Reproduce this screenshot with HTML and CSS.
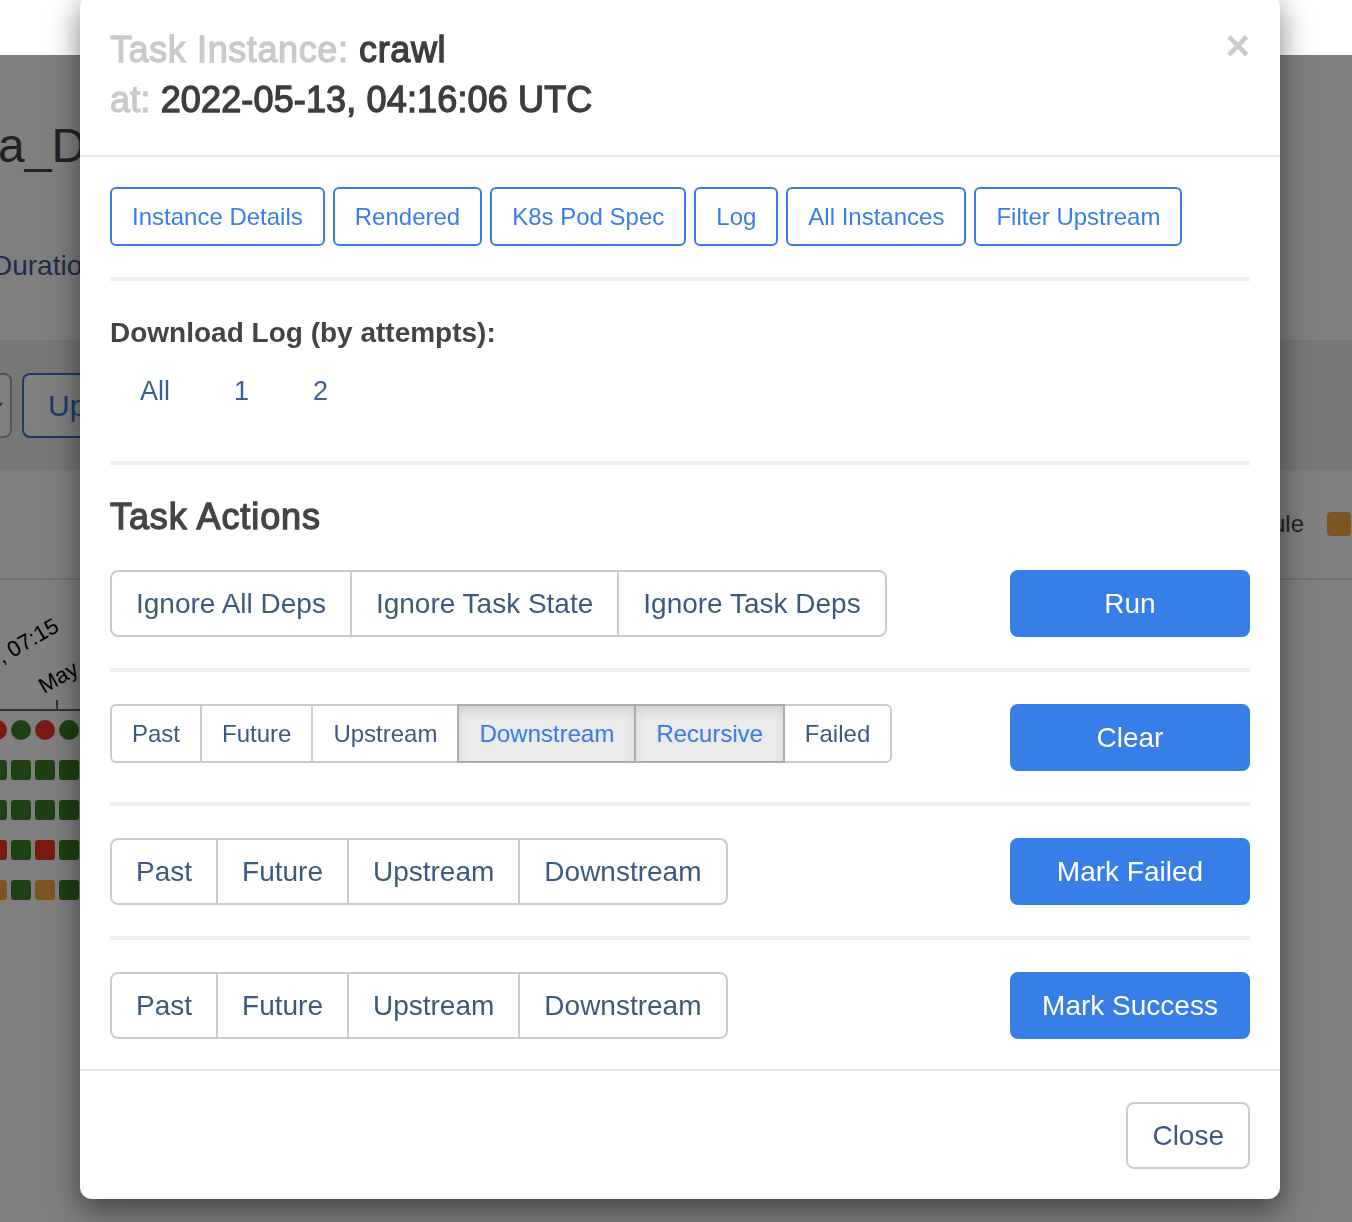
FILE: index.html
```html
<!DOCTYPE html>
<html lang="en">
<head>
    <meta charset="UTF-8">
    <meta name="viewport" content="width=device-width, initial-scale=1">
    <title>Task Instance: crawl</title>
    <link rel="stylesheet" href="styles.css">
</head>
<body>
    <div class="navbar"></div>

    <!-- page behind the modal -->
    <div class="page">
        <div class="page-header">
            <h2 class="dag-title">a_DAG</h2>
            <div class="nav-tab">Duration</div>
        </div>
        <div class="toolbar">
            <div class="select">
                <svg width="16" height="10" viewBox="0 0 16 10"><path d="M2 2l6 6 6-6" fill="none" stroke="#666" stroke-width="2"/></svg>
            </div>
            <button class="btn-up">Update</button>
        </div>
        <div class="legend">
            <span>up_for_reschedule</span>
            <i class="swatch"></i>
        </div>
        <svg class="chart" width="1352" height="642">
            <text x="2" y="84" transform="rotate(-30 2 84)">, 07:15</text>
            <text x="44" y="114" transform="rotate(-30 44 114)">May 13</text>
            <line x1="0" y1="130" x2="200" y2="130" stroke="#666" stroke-width="2"/>
            <line x1="57" y1="120" x2="57" y2="130" stroke="#666" stroke-width="2"/>
            <circle cx="-3" cy="150" r="10" class="failed"/>
            <circle cx="21" cy="150" r="10" class="success"/>
            <circle cx="45" cy="150" r="10" class="failed"/>
            <circle cx="69" cy="150" r="10" class="success"/>
            <rect x="-13" y="180" width="20" height="20" rx="3" class="success"/>
            <rect x="11" y="180" width="20" height="20" rx="3" class="success"/>
            <rect x="35" y="180" width="20" height="20" rx="3" class="success"/>
            <rect x="59" y="180" width="20" height="20" rx="3" class="success"/>
            <rect x="-13" y="220" width="20" height="20" rx="3" class="success"/>
            <rect x="11" y="220" width="20" height="20" rx="3" class="success"/>
            <rect x="35" y="220" width="20" height="20" rx="3" class="success"/>
            <rect x="59" y="220" width="20" height="20" rx="3" class="success"/>
            <rect x="-13" y="260" width="20" height="20" rx="3" class="failed"/>
            <rect x="11" y="260" width="20" height="20" rx="3" class="success"/>
            <rect x="35" y="260" width="20" height="20" rx="3" class="failed"/>
            <rect x="59" y="260" width="20" height="20" rx="3" class="success"/>
            <rect x="-13" y="300" width="20" height="20" rx="3" class="retry"/>
            <rect x="11" y="300" width="20" height="20" rx="3" class="success"/>
            <rect x="35" y="300" width="20" height="20" rx="3" class="retry"/>
            <rect x="59" y="300" width="20" height="20" rx="3" class="success"/>
        </svg>
    </div>

    <div class="backdrop"></div>

    <!-- task instance modal -->
    <div class="modal">
        <div class="modal-header">
            <button class="close">&times;</button>
            <h4 class="modal-title">
                <span class="title-line"><span class="muted">Task Instance:</span> crawl</span>
                <span class="date-line"><span class="muted">at:</span> 2022-05-13, 04:16:06 UTC</span>
            </h4>
        </div>
        <div class="modal-body">
            <div class="links">
                <a class="btn btn-outline">Instance Details</a>
                <a class="btn btn-outline">Rendered</a>
                <a class="btn btn-outline">K8s Pod Spec</a>
                <a class="btn btn-outline">Log</a>
                <a class="btn btn-outline">All Instances</a>
                <a class="btn btn-outline">Filter Upstream</a>
            </div>
            <hr>
            <strong class="label">Download Log (by attempts):</strong>
            <ul class="pills">
                <li><a>All</a></li>
                <li><a>1</a></li>
                <li><a>2</a></li>
            </ul>
            <hr>
            <h4 class="section-title">Task Actions</h4>

            <div class="action-row">
                <div class="btn-group btn-group-lg">
                    <button class="btn">Ignore All Deps</button>
                    <button class="btn">Ignore Task State</button>
                    <button class="btn">Ignore Task Deps</button>
                </div>
                <button class="btn btn-primary">Run</button>
            </div>
            <hr>
            <div class="action-row">
                <div class="btn-group">
                    <button class="btn">Past</button>
                    <button class="btn">Future</button>
                    <button class="btn">Upstream</button>
                    <button class="btn active">Downstream</button>
                    <button class="btn active">Recursive</button>
                    <button class="btn">Failed</button>
                </div>
                <button class="btn btn-primary">Clear</button>
            </div>
            <hr>
            <div class="action-row">
                <div class="btn-group btn-group-lg">
                    <button class="btn">Past</button>
                    <button class="btn">Future</button>
                    <button class="btn">Upstream</button>
                    <button class="btn">Downstream</button>
                </div>
                <button class="btn btn-primary">Mark Failed</button>
            </div>
            <hr>
            <div class="action-row">
                <div class="btn-group btn-group-lg">
                    <button class="btn">Past</button>
                    <button class="btn">Future</button>
                    <button class="btn">Upstream</button>
                    <button class="btn">Downstream</button>
                </div>
                <button class="btn btn-primary">Mark Success</button>
            </div>
        </div>
        <div class="modal-footer">
            <button class="btn btn-lg">Close</button>
        </div>
    </div>
</body>
</html>
```

FILE: styles.css
```css
body {
    font-family: "Liberation Sans", Arial, sans-serif;
    font-size: 28px;
    color: #444;
    margin: 0;
    padding: 0;
    width: 1352px;
    height: 1222px;
    overflow: hidden;
    background: #fff;
}

/* ---------- page behind ---------- */

.navbar {
    position: fixed;
    top: 0;
    left: 0;
    right: 0;
    height: 55px;
    background: #fff;
    z-index: 20;
}

.page {
    padding-top: 55px;
}

.page-header {
    height: 285px;
    padding-top: 63px;
    box-sizing: border-box;
}

.dag-title {
    margin: 0 0 0 -2px;
    font-size: 48px;
    font-weight: normal;
    line-height: 56px;
    color: #444;
}

.nav-tab {
    margin: 72px 0 0 -8px;
    line-height: 40px;
    color: #3c6090;
}

.toolbar {
    display: flex;
    height: 130px;
    padding-top: 33px;
    box-sizing: border-box;
    background: #eee;
}

.select {
    width: 100px;
    height: 65px;
    margin-left: -88px;
    padding-right: 6px;
    box-sizing: border-box;
    display: flex;
    align-items: center;
    justify-content: flex-end;
    background: #fff;
    border: 2px solid #aaa;
    border-radius: 8px;
}

.btn-up {
    height: 65px;
    margin-left: 10px;
    padding: 0 24px;
    font-family: inherit;
    font-size: 30px;
    color: #3a74d4;
    background: #fff;
    border: 2px solid #3a74d4;
    border-radius: 8px;
}

.legend {
    display: flex;
    justify-content: flex-end;
    align-items: center;
    height: 108px;
    padding-right: 1px;
    border-bottom: 2px solid #e2e2e2;
    font-size: 24px;
    color: #444;
}

.swatch {
    width: 24px;
    height: 24px;
    margin-left: 23px;
    border-radius: 4px;
    background: #faaa46;
}

.chart {
    display: block;
    overflow: visible;
}

.chart text {
    font-family: "Liberation Sans", Arial, sans-serif;
    font-size: 22px;
    fill: #000;
}

.success { fill: #3e8028; }
.failed { fill: #f0362a; }
.retry { fill: #faaa46; }

.backdrop {
    position: fixed;
    top: 0;
    left: 0;
    right: 0;
    bottom: 0;
    background: rgba(0, 0, 0, 0.5);
    z-index: 10;
}

/* ---------- modal ---------- */

.modal {
    position: absolute;
    top: -5px;
    left: 80px;
    width: 1200px;
    background: #fff;
    border-radius: 12px;
    box-shadow: 0 10px 30px rgba(0, 0, 0, 0.5);
    z-index: 30;
}

.modal-header {
    padding: 30px;
    border-bottom: 2px solid #e5e5e5;
}

.modal-title {
    margin: 0;
    font-size: 36px;
    font-weight: normal;
    line-height: 50px;
    color: #3d3d3d;
    -webkit-text-stroke-width: 1.3px;
}

.title-line,
.date-line {
    display: block;
}

.title-line {
    letter-spacing: 0.6px;
}

.date-line {
    letter-spacing: 0.15px;
}

.muted {
    color: #cacaca;
}

.close {
    float: right;
    padding: 0;
    border: 0;
    background: none;
    font-family: inherit;
    font-size: 42px;
    font-weight: bold;
    line-height: 1;
    color: #000;
    opacity: 0.2;
}

.modal-body {
    padding: 30px;
}

.modal-footer {
    padding: 31px 30px 30px;
    border-top: 2px solid #e5e5e5;
    text-align: right;
}

hr {
    height: 4px;
    margin: 31px 0 32px;
    border: 0;
    background: #eee;
}

.label {
    display: block;
    font-weight: bold;
    line-height: 40px;
    color: #444;
}

.pills {
    display: flex;
    gap: 4px;
    list-style: none;
    margin: 0;
    padding: 0;
}

.pills a {
    display: block;
    padding: 20px 30px;
    font-size: 27px;
    line-height: 37px;
    color: #3b6190;
}

.section-title {
    margin: 0 0 33px;
    font-size: 36px;
    font-weight: normal;
    line-height: 40px;
    letter-spacing: 0.9px;
    color: #444;
    -webkit-text-stroke-width: 1.3px;
}

/* ---------- buttons ---------- */

.btn {
    display: inline-block;
    padding: 12px 20px;
    font-family: inherit;
    font-size: 24px;
    line-height: 31px;
    color: #3c5a80;
    background: #fff;
    border: 2px solid #ccc;
    border-radius: 6px;
    white-space: nowrap;
}

.btn-lg,
.btn-group-lg .btn {
    padding: 16px 24px;
    font-size: 28px;
    border-radius: 8px;
}

.links {
    display: flex;
    gap: 8px;
}

.btn-outline {
    color: #3a7de4;
    border-color: #3a7de4;
}

.action-row {
    display: flex;
    justify-content: space-between;
    align-items: flex-start;
}

.btn-group {
    display: flex;
}

.btn-group .btn + .btn {
    margin-left: -2px;
}

.btn-group .btn:not(:first-child) {
    border-top-left-radius: 0;
    border-bottom-left-radius: 0;
}

.btn-group .btn:not(:last-child) {
    border-top-right-radius: 0;
    border-bottom-right-radius: 0;
}

.btn.active {
    position: relative;
    color: #3a7de4;
    background: #ebebeb;
    border-color: #adadad;
    box-shadow: inset 0 6px 10px rgba(0, 0, 0, 0.1);
}

.btn-primary {
    width: 240px;
    padding: 16px 0;
    font-size: 28px;
    color: #fff;
    background: #377ee6;
    border-color: #377ee6;
    border-radius: 8px;
}
```
